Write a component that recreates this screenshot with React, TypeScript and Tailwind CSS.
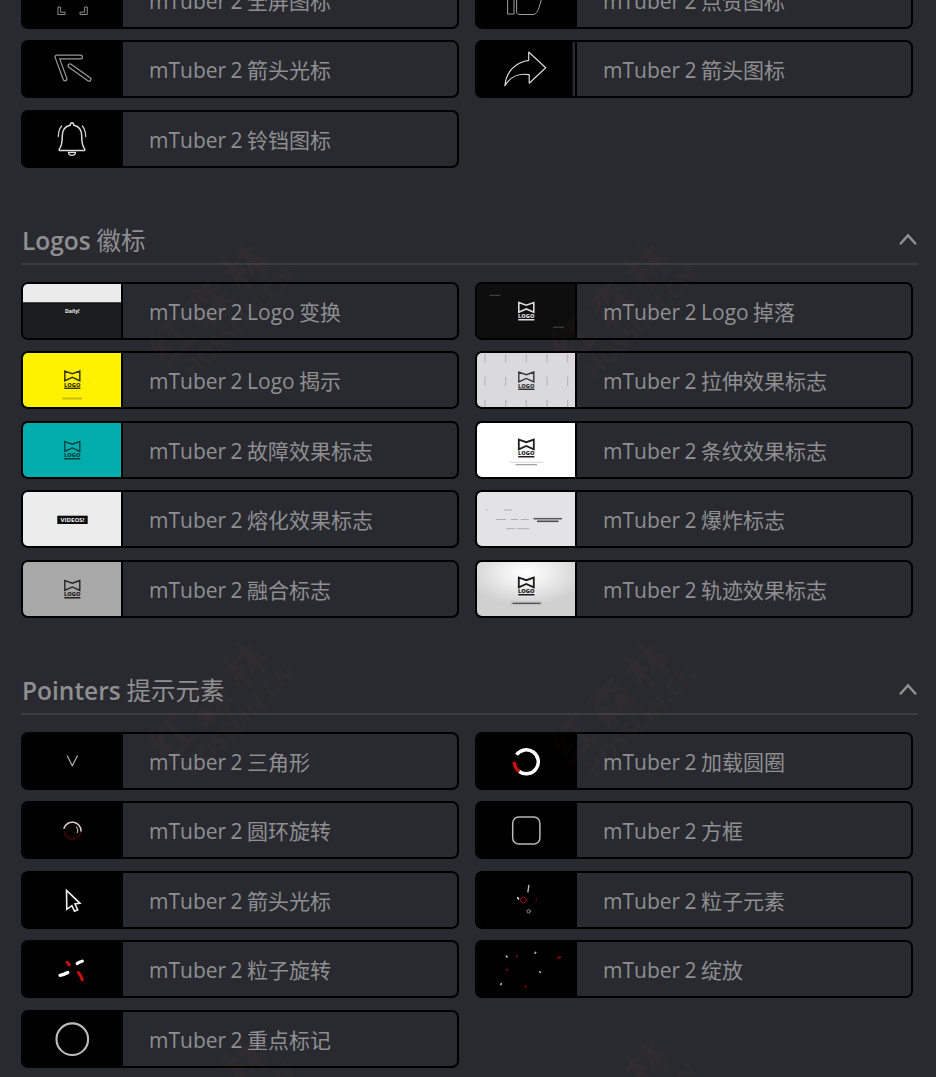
import type { ReactNode } from 'react';

interface Preset {
  name: string;
  thumb: ReactNode;
}

interface SectionProps {
  title: string;
  subtitle: string;
  items: Preset[];
}

const RED = '#c4100f';

// Bow-tie logo mark shared by most of the logo presets
function LogoMark({ y = 17, color = '#222222', weight = 1.3 }: { y?: number; color?: string; weight?: number }) {
  return (
    <g transform={`translate(41 ${y})`}>
      <path
        d="M0.8 0.6 L8.3 3.2 L15.8 0.6 V10.3 L8.3 6.9 L0.8 10.3 Z"
        fill="none"
        stroke={color}
        strokeWidth={weight}
        strokeLinejoin="miter"
      />
      <text
        x="0"
        y="16"
        textLength="16.6"
        lengthAdjust="spacingAndGlyphs"
        fontSize="5.4"
        fontWeight="800"
        fill={color}
      >
        LOGO
      </text>
      <rect x="0.2" y="17" width="16.2" height="1.5" fill={color} />
    </g>
  );
}

function Thumb({ bg = '#000000', children }: { bg?: string; children: ReactNode }) {
  return (
    <svg
      width="98"
      height="54"
      viewBox="0 0 98 54"
      fill="none"
      strokeLinecap="round"
      strokeLinejoin="round"
      className="block shrink-0"
    >
      <rect width="98" height="54" fill={bg} />
      {children}
    </svg>
  );
}

const icons: Preset[] = [
  {
    name: '全屏图标',
    thumb: (
      <Thumb>
        <path
          d="M35.3 34 H37.6 V39.2 H42 V41.5 H35.3 Z M63.9 34 H61.6 V39.2 H57 V41.5 H63.9 Z"
          stroke="#8c8c8c"
          strokeWidth="1"
        />
      </Thumb>
    ),
  },
  {
    name: '点赞图标',
    thumb: (
      <Thumb>
        <path d="M31 22 H37 V41 H31 Z" stroke="#a0a0a0" strokeWidth="1" />
        <path d="M39.6 24 V39.2 C39.6 40.7 41 41.5 43 41.5 H56 C59 41.5 60.5 38.5 62 34.5 L64.3 27" stroke="#a0a0a0" strokeWidth="1" />
      </Thumb>
    ),
  },
  {
    name: '箭头光标',
    thumb: (
      <Thumb>
        <path d="M57.5 15 H34 L42 36.8 M47 23.8 L66 37.2" stroke="#999999" strokeWidth="5" />
        <path d="M57.5 15 H34 L42 36.8 M47 23.8 L66 37.2" stroke="#000000" strokeWidth="2.6" />
      </Thumb>
    ),
  },
  {
    name: '箭头图标',
    thumb: (
      <Thumb>
        <path
          d="M51.7 10 L68.7 25.7 L52.2 41.2 V32.7 C42 31 33 35 27.9 43.8 C29 30 38 20.5 51.7 18.3 Z"
          stroke="#d8d8d8"
          strokeWidth="1.2"
        />
        <rect x="95.5" width="2.5" height="54" fill="#292a2f" />
      </Thumb>
    ),
  },
  {
    name: '铃铛图标',
    thumb: (
      <Thumb>
        <path
          d="M49 10.8 C47.6 10.8 47.3 12 47.2 13.2 C42 14.3 39.3 18 39.3 23.5 C39.3 30 39 34 36.3 37 C36 38.2 36.4 38.5 37.5 38.5 H60.5 C61.6 38.5 62 38.2 61.7 37 C59 34 58.7 30 58.7 23.5 C58.7 18 56 14.3 50.8 13.2 C50.7 12 50.4 10.8 49 10.8 Z"
          stroke="#dcdcdc"
          strokeWidth="1.5"
        />
        <path d="M45.5 40.3 H52.5 C52.5 44.3 45.5 44.3 45.5 40.3 Z" stroke="#dcdcdc" strokeWidth="1.3" />
        <path d="M38.7 14 C36.6 16.5 35.3 20 35.3 24.5 M59.3 14 C61.4 16.5 62.7 20 62.7 24.5" stroke="#cccccc" strokeWidth="1.3" />
      </Thumb>
    ),
  },
];

const logos: Preset[] = [
  {
    name: 'Logo 变换',
    thumb: (
      <Thumb bg="#1c1d1f">
        <rect width="98" height="18.5" fill="#ebebeb" />
        <rect y="18.5" width="98" height="1" fill="#0c0c0c" />
        <text x="49.3" y="28.8" textAnchor="middle" fontSize="5.2" fontWeight="700" fill="#f0f0f0">
          Daily!
        </text>
      </Thumb>
    ),
  },
  {
    name: 'Logo 掉落',
    thumb: (
      <Thumb bg="#0e0e0e">
        <LogoMark y={18} color="#dddddd" weight={1.6} />
        <path d="M12.5 11.3 H23.5 M76 43.2 H87" stroke="#4c4c4c" strokeWidth="1" strokeLinecap="butt" />
      </Thumb>
    ),
  },
  {
    name: 'Logo 揭示',
    thumb: (
      <Thumb bg="#fff200">
        <LogoMark y={17.5} color="#3a3700" weight={1.5} />
        <path d="M39.3 45.5 H59" stroke="#c8be10" strokeWidth="2" strokeLinecap="butt" />
        <circle cx="66" cy="30" r="0.5" fill="#c8bd10" />
      </Thumb>
    ),
  },
  {
    name: '拉伸效果标志',
    thumb: (
      <Thumb bg="#dadadd">
        <path
          d="M8 1 V9.5 M28.7 1 V9.5 M49.3 1 V9.5 M70 1 V9.5 M90.7 1 V9.5 M8 23.5 V33 M28.7 23.5 V33 M70 23.5 V33 M90.7 23.5 V33 M8 47 V54 M28.7 47 V54 M49.3 47 V54 M70 47 V54 M90.7 47 V54"
          stroke="#aeaeb2"
          strokeWidth="0.9"
          strokeLinecap="butt"
        />
        <LogoMark y={18.5} color="#333336" weight={1.4} />
      </Thumb>
    ),
  },
  {
    name: '故障效果标志',
    thumb: (
      <Thumb bg="#02adab">
        <LogoMark y={18} color="#06403f" weight={1.4} />
      </Thumb>
    ),
  },
  {
    name: '条纹效果标志',
    thumb: (
      <Thumb bg="#ffffff">
        <LogoMark y={16} color="#1f1f1f" weight={1.8} />
        <path d="M33 39.3 H66" stroke="#c4c4c4" strokeWidth="0.7" strokeLinecap="butt" />
        <path d="M38.5 41.8 H60" stroke="#85858c" strokeWidth="1.1" strokeLinecap="butt" />
      </Thumb>
    ),
  },
  {
    name: '熔化效果标志',
    thumb: (
      <Thumb bg="#ececec">
        <rect x="34.3" y="23.7" width="30.4" height="8.3" fill="#0a0a0a" />
        <text
          x="37.5"
          y="30"
          textLength="24"
          lengthAdjust="spacingAndGlyphs"
          fontSize="6"
          fontWeight="700"
          fill="#f4f4f4"
        >
          VIDEOS!
        </text>
      </Thumb>
    ),
  },
  {
    name: '爆炸标志',
    thumb: (
      <Thumb bg="#e3e3e5">
        <path
          d="M9.3 18 H10.7 M27 18 H35.3 M19 27.5 H29 M34 27.5 H41.3 M43.7 27.5 H51.7 M29.3 36.7 H38.5 M40 36.7 H52.3"
          stroke="#a9a9ac"
          strokeWidth="0.9"
          strokeLinecap="butt"
        />
        <path d="M56.5 26.7 H85" stroke="#56565a" strokeWidth="1.5" strokeLinecap="butt" />
        <path d="M60 29.3 H81.5" stroke="#4c4c50" strokeWidth="1.6" strokeLinecap="butt" />
      </Thumb>
    ),
  },
  {
    name: '融合标志',
    thumb: (
      <Thumb bg="#a8a8a8">
        <LogoMark y={18} color="#222222" weight={1.4} />
      </Thumb>
    ),
  },
  {
    name: '轨迹效果标志',
    thumb: (
      <Thumb>
        <defs>
          <radialGradient id="spotlight" cx="0.5" cy="0.2" r="0.6">
            <stop offset="0" stopColor="#ffffff" />
            <stop offset="0.35" stopColor="#f1f1f1" />
            <stop offset="1" stopColor="#d0d0d0" />
          </radialGradient>
        </defs>
        <rect width="98" height="54" fill="url(#spotlight)" />
        <LogoMark y={15} color="#1a1a1a" weight={1.8} />
        <rect x="33.5" y="39.3" width="31.5" height="4" fill="#c2c2c2" />
        <path d="M35.5 41.4 H63.5" stroke="#505050" strokeWidth="1.4" strokeLinecap="butt" />
      </Thumb>
    ),
  },
];

const pointers: Preset[] = [
  {
    name: '三角形',
    thumb: (
      <Thumb>
        <path d="M44.3 22 L49.3 31.7 L54.3 22" stroke="#a8a8a8" strokeWidth="1.3" />
      </Thumb>
    ),
  },
  {
    name: '加载圆圈',
    thumb: (
      <Thumb>
        <path d="M37.3 27.7 A12 12 0 0 0 42.3 37.5" stroke={RED} strokeWidth="3.6" strokeLinecap="butt" />
        <path d="M39.5 20.8 A12 12 0 1 1 42.3 37.5" stroke="#ffffff" strokeWidth="3.5" strokeLinecap="butt" />
      </Thumb>
    ),
  },
  {
    name: '圆环旋转',
    thumb: (
      <Thumb>
        <circle cx="49.3" cy="27.8" r="6" stroke="#3a0505" strokeWidth="0.8" />
        <path d="M41.3 30 A8.6 8.6 0 0 0 58 29" stroke="#4a0707" strokeWidth="1.4" />
        <path d="M41 25.3 A8.7 8.7 0 0 1 58 28" stroke="#d9cfc8" strokeWidth="1.5" />
        <path d="M53.6 24 A6 6 0 0 1 54.3 29.5" stroke="#b8b0aa" strokeWidth="1.2" />
      </Thumb>
    ),
  },
  {
    name: '方框',
    thumb: (
      <Thumb>
        <rect x="35.7" y="13.9" width="27.2" height="27.2" rx="6" stroke="#b9b9b4" strokeWidth="1.5" />
      </Thumb>
    ),
  },
  {
    name: '箭头光标',
    thumb: (
      <Thumb>
        <path
          d="M43.5 17.3 L57 30.3 L52 31 L54.7 36.8 L51.5 38.2 L48.9 32.6 L43.8 36.3 Z"
          stroke="#eeeeee"
          strokeWidth="1.6"
          strokeLinejoin="miter"
        />
      </Thumb>
    ),
  },
  {
    name: '粒子元素',
    thumb: (
      <Thumb>
        <path d="M51.8 12.3 L50.9 18.8" stroke="#c4c4c4" strokeWidth="1.3" />
        <path d="M40.7 24.6 L41.5 26" stroke="#dddddd" strokeWidth="1.6" />
        <circle cx="46.3" cy="27" r="2.9" stroke="#8f0b0b" strokeWidth="1" />
        <path d="M59.6 24.5 L58.9 29.3" stroke="#5c0707" strokeWidth="0.9" />
        <circle cx="51.7" cy="38.3" r="1.7" stroke="#8a8a8a" strokeWidth="1" />
      </Thumb>
    ),
  },
  {
    name: '粒子旋转',
    thumb: (
      <Thumb>
        <path d="M37 33.3 C40 33 42.5 31.8 44.8 30.5 M54.2 21.5 C55.5 20.5 57.5 19.6 59.3 19.2" stroke="#ffffff" strokeWidth="3.2" />
        <path d="M44.2 20.5 L46.3 22.8 M55.3 30.6 C57 32.4 58.8 35 59.3 37.7" stroke={RED} strokeWidth="3.2" />
      </Thumb>
    ),
  },
  {
    name: '绽放',
    thumb: (
      <Thumb>
        <path d="M29.3 14.1 L30 14.9 M58.6 10.4 L58.1 11.2 M62.8 29.8 L63.4 30.5 M24.3 41.7 L23.8 42.6" stroke="#bdbdbd" strokeWidth="1.6" />
        <path d="M39.9 14.5 H40.2 M80.6 15.9 L83.3 15.2 M30 27.8 H30.2 M48.5 44.5 H48.9" stroke="#860a0a" strokeWidth="1.9" />
      </Thumb>
    ),
  },
  {
    name: '重点标记',
    thumb: (
      <Thumb>
        <circle cx="49.3" cy="27.2" r="15.8" stroke="#bdbdbd" strokeWidth="2.1" />
      </Thumb>
    ),
  },
];

function PresetGrid({ items }: { items: Preset[] }) {
  return (
    <div className="grid grid-cols-[438px_438px] gap-x-4 gap-y-[11.5px]">
      {items.map((item) => (
        <div key={item.name} className="flex h-[58px] items-stretch overflow-hidden rounded-[7px] border-2 border-black">
          <div className="shrink-0 border-r-2 border-black">{item.thumb}</div>
          <div className="flex items-center pt-1 pl-[26px] text-[21px] whitespace-pre text-[#8f8f92] [word-spacing:-1px]">
            mTuber 2 {item.name}
          </div>
        </div>
      ))}
    </div>
  );
}

function Section({ title, subtitle, items }: SectionProps) {
  return (
    <section>
      <div className="mb-[17px] flex h-[97px] w-[897px] items-end justify-between border-b-2 border-[#3d3d41] pb-[5px] text-[#8f8f92]">
        <h2 className="pl-px text-[24.5px] leading-[34px] [word-spacing:-0.5px]">
          <span className="font-semibold">{title}</span> {subtitle}
        </h2>
        <svg width="20" height="14" viewBox="0 0 20 14" fill="none" className="mb-3">
          <path d="M2.7 11.5 L10 3.3 L17.3 11.5" stroke="#8f8f92" strokeWidth="2.5" strokeLinecap="round" />
        </svg>
      </div>
      <PresetGrid items={items} />
    </section>
  );
}

const watermarks = [
  'left-[78px] top-[300px]',
  'left-[480px] top-[300px]',
  'left-[78px] top-[698px]',
  'left-[480px] top-[698px]',
  'left-[78px] top-[1096px]',
  'left-[480px] top-[1096px]',
  'left-[882px] top-[300px]',
  'left-[882px] top-[698px]',
];

export default function App() {
  return (
    <main className="relative h-[1077px] w-[936px] overflow-hidden bg-[#292a2f] pl-[21px] font-['Open_Sans','Noto_Sans_CJK_SC',sans-serif]">
      <div className="-mt-[29.5px]">
        <PresetGrid items={icons} />
        <Section title="Logos" subtitle="徽标" items={logos} />
        <Section title="Pointers" subtitle="提示元素" items={pointers} />
      </div>

      {/* Tiled watermark */}
      {watermarks.map((position) => (
        <div
          key={position}
          aria-hidden="true"
          className={`pointer-events-none absolute w-[230px] -rotate-45 text-right font-bold text-[#ff8a7a] opacity-[0.02] ${position}`}
        >
          <div className="text-[44px] leading-[46px] tracking-[8px]">红森林</div>
          <div className="text-[24px] leading-6">HOSSLIN.CN</div>
        </div>
      ))}
    </main>
  );
}
